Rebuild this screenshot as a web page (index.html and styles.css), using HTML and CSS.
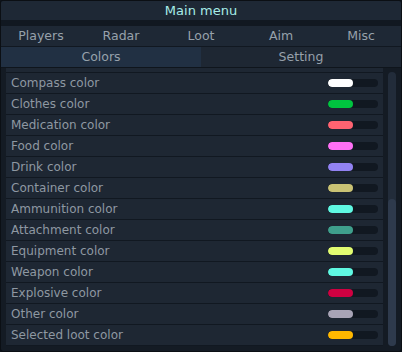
FILE: index.html
```html
<!DOCTYPE html>
<html lang="en">
<head>
  <meta charset="UTF-8">
  <title>Main menu</title>
  <link rel="stylesheet" href="styles.css">
</head>
<body>
  <div class="window">
    <div class="title">Main menu</div>
    <div class="title-gap"></div>

    <!-- main tabs -->
    <div class="tabs">
      <div class="tab">Players</div>
      <div class="tab">Radar</div>
      <div class="tab">Loot</div>
      <div class="tab">Aim</div>
      <div class="tab">Misc</div>
    </div>

    <!-- loot sub tabs -->
    <div class="subtabs">
      <div class="subtab active">Colors</div>
      <div class="subtab">Setting</div>
    </div>

    <div class="content">
      <div class="list">
        <div class="row partial"></div>
        <div class="row"><span>Compass color</span><div class="swatch"><i style="background:#ffffff"></i></div></div>
        <div class="row"><span>Clothes color</span><div class="swatch"><i style="background:#00c43f"></i></div></div>
        <div class="row"><span>Medication color</span><div class="swatch"><i style="background:#ff6371"></i></div></div>
        <div class="row"><span>Food color</span><div class="swatch"><i style="background:#ff70f5"></i></div></div>
        <div class="row"><span>Drink color</span><div class="swatch"><i style="background:#9282f2"></i></div></div>
        <div class="row"><span>Container color</span><div class="swatch"><i style="background:#c9c274"></i></div></div>
        <div class="row"><span>Ammunition color</span><div class="swatch"><i style="background:#5ff8e2"></i></div></div>
        <div class="row"><span>Attachment color</span><div class="swatch"><i style="background:#3f9f8c"></i></div></div>
        <div class="row"><span>Equipment color</span><div class="swatch"><i style="background:#e2fc71"></i></div></div>
        <div class="row"><span>Weapon color</span><div class="swatch"><i style="background:#5ff8e2"></i></div></div>
        <div class="row"><span>Explosive color</span><div class="swatch"><i style="background:#cf0041"></i></div></div>
        <div class="row"><span>Other color</span><div class="swatch"><i style="background:#a8a4b6"></i></div></div>
        <div class="row"><span>Selected loot color</span><div class="swatch"><i style="background:#ffb700"></i></div></div>
      </div>
      <div class="scrollbar">
        <div class="thumb"></div>
      </div>
    </div>
  </div>
</body>
</html>
```

FILE: styles.css
```css
html, body {
  margin: 0;
  background: #0e131a;
}
body {
  font-family: 'DejaVu Sans', Arial, sans-serif;
  font-size: 12px;
  color: #8e98a2;
}
.window {
  width: 402px;
  height: 352px;
  box-sizing: border-box;
  border: 1px solid #0b0f14;
  border-radius: 3px;
  background: #141b24;
  overflow: hidden;
  display: flex;
  flex-direction: column;
}
.title {
  height: 19px;
  line-height: 19px;
  text-align: center;
  background: #1e2835;
  color: #a6ece8;
  font-size: 13px;
}
.title-gap { height: 6px; background: #111821; }
.tabs {
  display: grid;
  grid-template-columns: repeat(5, 1fr);
  height: 20px;
  background: #1e2835;
  border-bottom: 1px solid #111821;
}
.tab, .subtab {
  text-align: center;
  line-height: 20px;
  font-size: 12.5px;
  color: #97a1ab;
}
.subtabs {
  display: grid;
  grid-template-columns: 1fr 1fr;
  height: 20px;
  background: #1e2733;
}
.subtab.active { background: #213043; }
.content {
  flex: 1;
  display: flex;
  border-top: 1px solid #0f151c;
  min-height: 0;
}
.list {
  flex: 1;
  padding-left: 5px;
  overflow: hidden;
}
.row {
  height: 20px;
  border-bottom: 1px solid #111821;
  background: #1e2733;
  display: flex;
  align-items: center;
  padding-left: 5px;
}
.row.partial { height: 4px; }
.row span { flex: 1; }
.swatch {
  width: 50px;
  height: 8px;
  margin-right: 5px;
  border-radius: 4px;
  background: #111821;
  overflow: hidden;
}
.swatch i {
  display: block;
  width: 25px;
  height: 8px;
  border-radius: 4px;
}
.scrollbar {
  width: 8px;
  margin: 4px 5px 5px 5px;
  border-radius: 4px;
  background: #222c3a;
  display: flex;
  flex-direction: column;
  justify-content: flex-end;
}
.thumb {
  height: 147px;
  border-radius: 4px;
  background: #2e3a4c;
}
```
